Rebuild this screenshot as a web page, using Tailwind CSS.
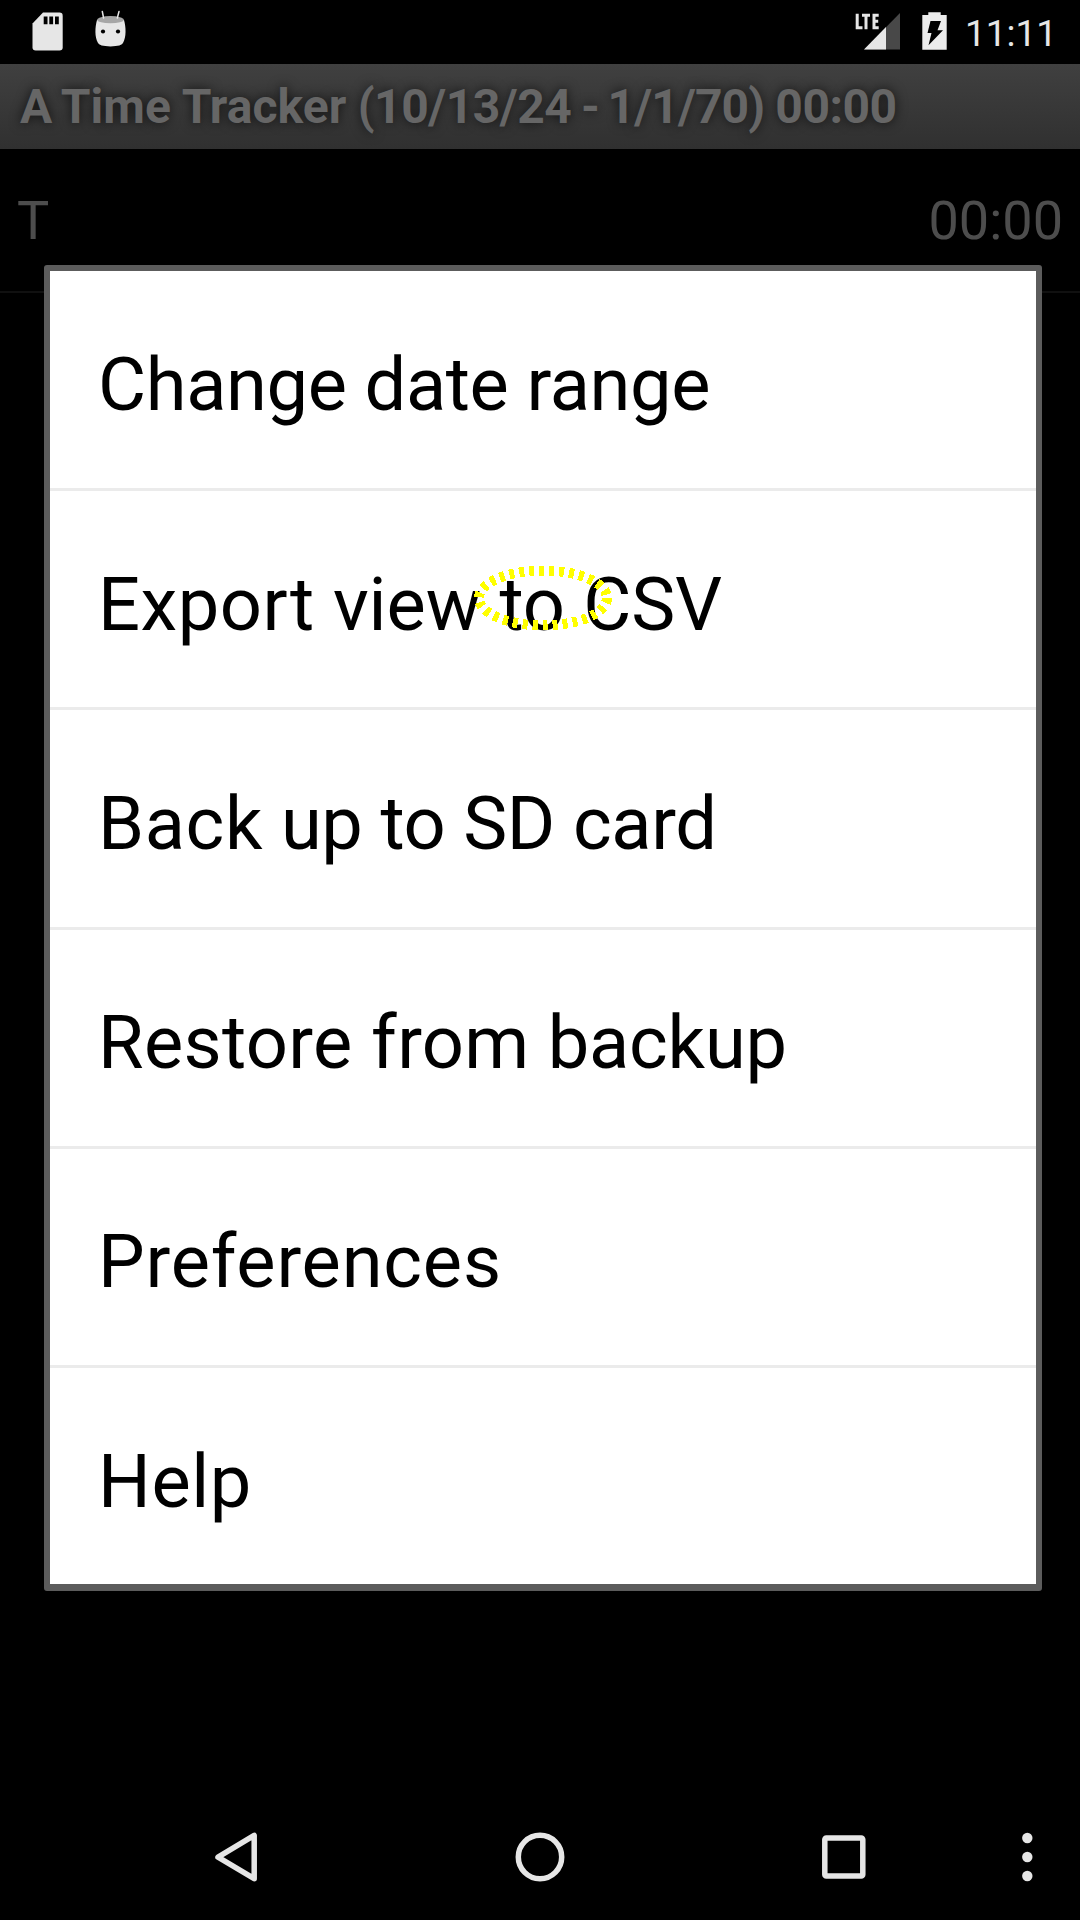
<!DOCTYPE html>
<html lang="en">
<head>
<meta charset="utf-8">
<title>A Time Tracker</title>
<script src="https://cdn.jsdelivr.net/npm/@tailwindcss/browser@4"></script>
</head>
<body class="bg-black">
<div class="relative flex h-[1920px] w-[1080px] flex-col overflow-hidden bg-black font-[Roboto,sans-serif]">
  <header class="flex h-16 shrink-0 items-start">
    <svg class="h-16 w-[140px]" viewBox="0 0 140 64">
      <path d="M43 12.500h16.500a3.200 3.200 0 0 1 3.200 3.200v31.600a3.200 3.200 0 0 1-3.200 3.200H35.700a3.200 3.200 0 0 1-3.200-3.200V23.500z" fill="#e6e6e6"/>
      <path d="M43.700 16.500h3.800v7.700h-3.800zM49.300 16.500h3.800v7.700h-3.800zM55 16.500h3.800v7.700H55z" fill="#000"/>
      <path d="M97 20C95 27 94.500 37 98 43Q99 46 110.500 46.500Q122 46 123 43C126.500 37 126 27 124 20z" fill="#e6e6e6"/>
      <ellipse cx="110.500" cy="19.700" rx="13.300" ry="3.600" fill="#a6a6a6"/>
      <path d="M102.300 11.500l1.300 6.500M119 11.500l-1.700 6.500" stroke="#e6e6e6" stroke-width="1.500" stroke-linecap="round"/>
      <circle cx="103" cy="31.500" r="2.100" fill="#000"/><circle cx="118" cy="31.500" r="2.100" fill="#000"/>
    </svg>
    <svg class="ml-[700px] h-16 w-[120px]" viewBox="840 0 120 64">
      <path d="M864 49.500L900 13v36.500z" fill="#484848"/>
      <path d="M864 49.500L886 27v22.500z" fill="#e6e6e6"/>
      <path d="M857.200 13.700V27.800H862.500M862 15.300h8M866 15v14.200M878.700 15.300h-4.700v12.500h4.700M874 21.300h4.200" fill="none" stroke="#e6e6e6" stroke-width="3"/>
      <path d="M922.300 15h6V12.300h12.400V15h6v34.700h-24.400z" fill="#ececec"/>
      <path d="M930.500 21h10.500l-3.500 9.300h5.500L928.500 45.300l3-12.300h-4z" fill="#000"/>
    </svg>
    <span class="ml-[5px] mt-[12px] text-[37px] leading-[44px] text-[#e6e6e6]">11:11</span>
  </header>
  <div class="flex h-[85px] shrink-0 items-center bg-linear-to-b from-[#404040] to-[#303030] pl-5">
    <h1 class="whitespace-nowrap text-[48px] font-bold leading-[56px] text-[#666] [text-shadow:0_0_12px_#000b]"><span class="tracking-[-1.7px]">A </span><span class="tracking-[0.05px]">Time Tracker</span><span class="tracking-[-0.45px]"> (10/13/24</span><span class="tracking-[-2.2px]"> - </span><span class="tracking-[-0.85px]">1/1/70) </span><span class="tracking-[-0.5px]">00:00</span></h1>
  </div>
  <div class="flex h-[144px] shrink-0 items-center justify-between border-b-2 border-[#101010] px-[17px] pt-[2px] text-[54px] leading-[64px] text-[#4d4d4d]">
    <span>T</span><span>00:00</span>
  </div>
  <main class="grow"></main>
  <nav class="h-[126px] shrink-0">
    <svg class="h-[126px] w-[1080px]" viewBox="0 1794 1080 126" fill="none" stroke="#e6e6e6" stroke-width="5.500" stroke-linejoin="round">
      <path d="M254.200 1835.300v43.400L218 1857.200z"/>
      <circle cx="540" cy="1857" r="21.700"/>
      <rect x="824.800" y="1838" width="38" height="38" rx="1.500"/>
      <g fill="#e6e6e6" stroke="none"><circle cx="1027.300" cy="1838" r="5.200"/><circle cx="1027.300" cy="1857" r="5.200"/><circle cx="1027.300" cy="1876" r="5.200"/></g>
    </svg>
  </nav>
  <ul class="absolute left-[44px] top-[265px] flex h-[1326px] w-[998px] flex-col divide-y-[3px] divide-[#ebebeb] rounded-[3px] border-x-[6px] border-b-[7px] border-t-[6px] border-[#5c5c5c] bg-white pt-px text-[74px] leading-[88px] text-black">
    <li class="flex flex-1 items-center pl-[48px] pt-[11px]"><span class="pb-[2px] tracking-[-0.38px]">Change date range</span></li>
    <li class="flex flex-1 items-center pl-[48px] pt-[11px]"><span><span class="tracking-[0.5px]">Export</span><span class="tracking-[-0.1px]"> view to CSV</span></span></li>
    <li class="flex flex-1 items-center pl-[48px] pt-[11px]"><span><span class="tracking-[0.6px]">Back</span><span class="tracking-[-0.4px]"> up to SD card</span></span></li>
    <li class="flex flex-1 items-center pl-[48px] pt-[11px]"><span><span class="tracking-[0.3px]">Restore from</span><span class="tracking-[-0.2px]"> backup</span></span></li>
    <li class="flex flex-1 items-center pl-[48px] pt-[11px]"><span class="tracking-[0.8px]">Preferences</span></li>
    <li class="flex flex-1 items-center pl-[48px] pt-[11px]"><span class="pt-[2px] tracking-[0.6px]">Help</span></li>
  </ul>
  <svg class="absolute left-[463px] top-[556px] h-[84px] w-[160px]" viewBox="463 556 160 84" shape-rendering="crispEdges">
    <ellipse cx="543" cy="598" rx="64" ry="27.500" fill="none" stroke="#ff0" stroke-width="10" stroke-dasharray="5 5"/>
  </svg>
</div>
</body>
</html>
